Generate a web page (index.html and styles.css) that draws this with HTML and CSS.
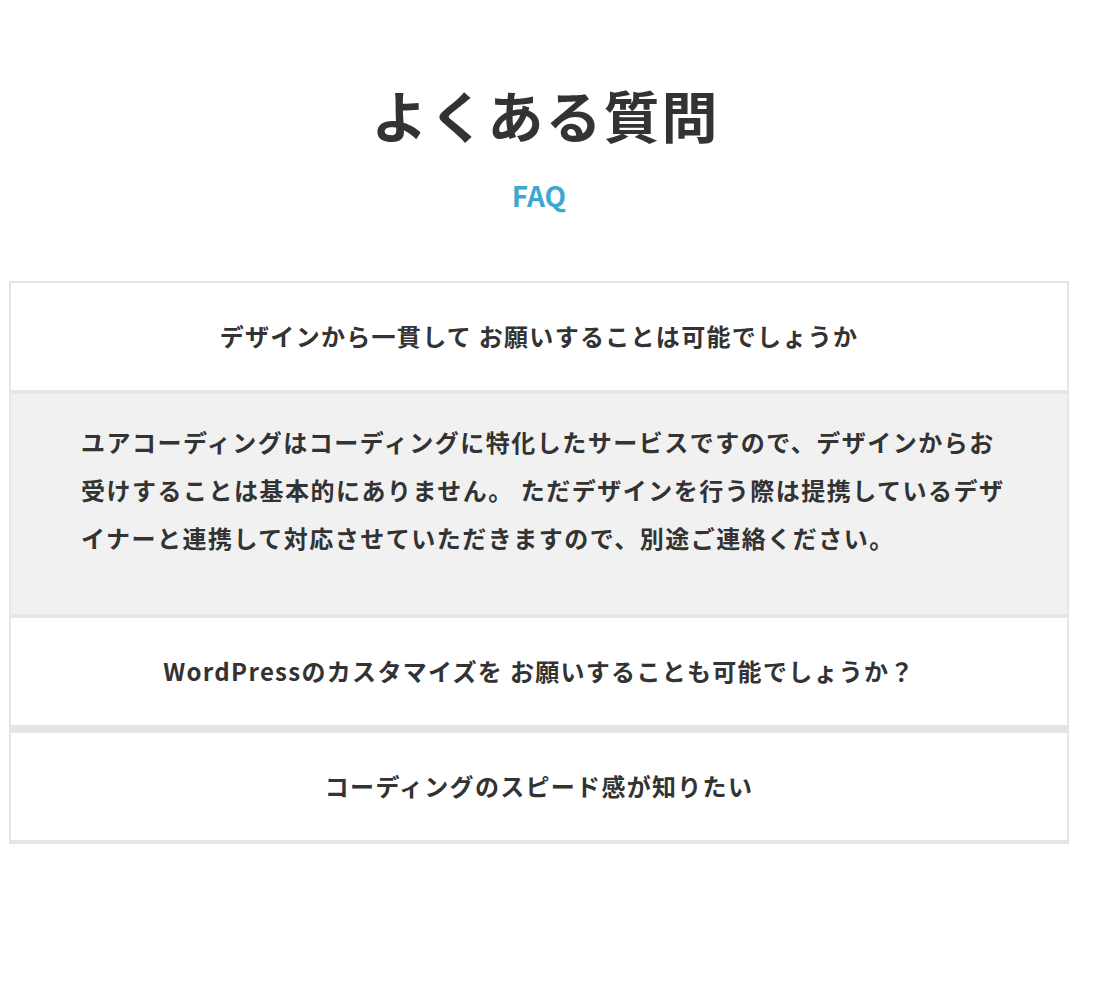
FILE: index.html
```html
<!DOCTYPE html>
<html lang="ja">
<head>
    <meta charset="UTF-8">
    <meta name="viewport" content="width=device-width, initial-scale=1.0">
    <title>よくある質問</title>
    <link rel="stylesheet" href="styles.css">
</head>
<body>
    <section class="faq">
        <div class="faq-head">
            <h2 class="faq-title">よくある質問</h2>
            <p class="faq-sub">FAQ</p>
        </div>

        <dl class="faq-list">
            <div class="faq-item">
                <dt class="faq-question">デザインから一貫して お願いすることは可能でしょうか</dt>
                <dd class="faq-answer">
                    <p>ユアコーディングはコーディングに特化したサービスですので、デザインからお受けすることは基本的にありません。 ただデザインを行う際は提携しているデザイナーと連携して対応させていただきますので、別途ご連絡ください。</p>
                </dd>
            </div>
            <div class="faq-item">
                <dt class="faq-question">WordPressのカスタマイズを お願いすることも可能でしょうか？</dt>
            </div>
            <div class="faq-item">
                <dt class="faq-question">コーディングのスピード感が知りたい</dt>
            </div>
        </dl>
    </section>
</body>
</html>
```

FILE: styles.css
```css
* {
    box-sizing: border-box;
}
body {
    margin: 0;
    background-color: #ffffff;
    color: #333333;
    font-family: "Noto Sans CJK JP", "Noto Sans", sans-serif;
    font-weight: bold;
}
.faq {
    width: 1060px;
    margin-left: 9px;
    padding-top: 72px;
}
.faq-head {
    text-align: center;
    margin-bottom: 65px;
}
.faq-title {
    margin: 0;
    padding-left: 13px;
    font-size: 56px;
    line-height: 84px;
    letter-spacing: 2px;
}
.faq-sub {
    margin: 18px 0 0;
    color: #3ea7d0;
    font-size: 28px;
    line-height: 42px;
}
.faq-list {
    margin: 0;
    border: 2px solid #e5e5e5;
    border-bottom: none;
}
.faq-item + .faq-item {
    border-top: 4px solid #e5e5e5;
}
.faq-question {
    padding: 29px 20px 30px;
    border-bottom: 4px solid #e5e5e5;
    background-color: #ffffff;
    font-size: 24px;
    line-height: 48px;
    letter-spacing: 1.3px;
    text-align: center;
}
.faq-answer {
    margin: 0;
    padding: 24px 58px 52px 70px;
    background-color: #f1f1f1;
    font-size: 24px;
    line-height: 48px;
    letter-spacing: 1.5px;
}
.faq-answer p {
    margin: 0;
}
```
